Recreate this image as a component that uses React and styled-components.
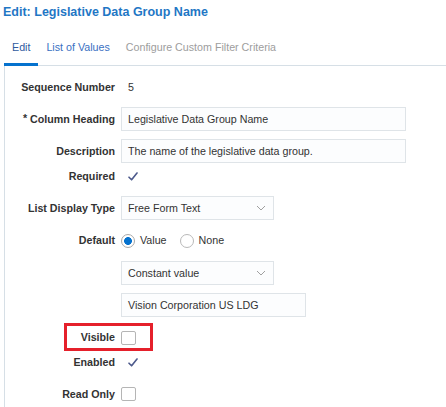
import React from 'react';
import styled, { createGlobalStyle } from 'styled-components';

const GlobalStyle = createGlobalStyle`
  html, body {
    margin: 0;
    padding: 0;
    background: #ffffff;
  }

  body {
    font-family: "Liberation Sans", Arial, sans-serif;
    color: #333333;
  }
`;

const tabs = [
  { label: 'Edit', state: 'active' },
  { label: 'List of Values', state: 'link' },
  { label: 'Configure Custom Filter Criteria', state: 'disabled' },
];

function CheckMark() {
  return (
    <Check width="10" height="9" viewBox="0 0 10 9">
      <path d="M1 5.2 L3.6 7.8 L9 1" fill="none" stroke="#4d5a8c" strokeWidth="1.6" strokeLinecap="round" strokeLinejoin="round" />
    </Check>
  );
}

function Chevron() {
  return (
    <ChevronIcon width="10" height="6" viewBox="0 0 10 6">
      <polyline points="1,1 5,5 9,1" fill="none" stroke="#a0a0a0" strokeWidth="1" />
    </ChevronIcon>
  );
}

function App() {
  return (
    <Page>
      <GlobalStyle />
      <Title>Edit: Legislative Data Group Name</Title>

      <TabBar>
        {tabs.map((tab) => (
          <Tab key={tab.label} $state={tab.state}>
            {tab.label}
          </Tab>
        ))}
      </TabBar>

      <Panel>
        <Row $mt={13}>
          <Label>Sequence Number</Label>
          <ReadValue>5</ReadValue>
        </Row>

        <Row $mt={12}>
          <Label>
            <Star>*</Star> Column Heading
          </Label>
          <TextBox $w={285}>Legislative Data Group Name</TextBox>
        </Row>

        <Row $mt={8}>
          <Label>Description</Label>
          <TextBox $w={285}>The name of the legislative data group.</TextBox>
        </Row>

        <Row $mt={5}>
          <Label>Required</Label>
          <CheckMark />
        </Row>

        <Row $mt={12}>
          <Label>List Display Type</Label>
          <SelectBox $w={153}>
            Free Form Text
            <Chevron />
          </SelectBox>
        </Row>

        <Row $mt={12.5}>
          <Label>Default</Label>
          <RadioGroup>
            <RadioOption>
              <Radio $checked />
              Value
            </RadioOption>
            <RadioOption>
              <Radio />
              None
            </RadioOption>
          </RadioGroup>
        </Row>

        <Row $mt={12.5}>
          <Label />
          <SelectBox $w={153}>
            Constant value
            <Chevron />
          </SelectBox>
        </Row>

        <Row $mt={8}>
          <Label />
          <TextBox $w={185}>Vision Corporation US LDG</TextBox>
        </Row>

        <Row $mt={12.5} $highlight>
          <Label>Visible</Label>
          <CheckBox />
        </Row>

        <Row $mt={8.5}>
          <Label>Enabled</Label>
          <CheckMark />
        </Row>

        <Row $mt={16}>
          <Label>Read Only</Label>
          <CheckBox />
        </Row>
      </Panel>
    </Page>
  );
}

const Page = styled.div`
  width: 446px;
  height: 407px;
  overflow: hidden;
  display: flex;
  flex-direction: column;
`;

const Title = styled.h1`
  margin: 0;
  padding: 4.5px 0 0 3px;
  font-size: 12.5px;
  line-height: 15px;
  font-weight: bold;
  color: #1f77c5;
`;

const TabBar = styled.div`
  display: flex;
  margin: 21.5px 0 0 4px;
  border-bottom: 1px solid #d6dfe6;
`;

const Tab = styled.div`
  padding: 0 8px 9px;
  margin-bottom: -1px;
  font-size: 10.7px;
  line-height: 13px;
  white-space: nowrap;
  border-bottom: 3px solid ${({ $state }) => ($state === 'active' ? '#0572ce' : 'transparent')};
  color: ${({ $state }) =>
    $state === 'active' ? '#2f5a9e' : $state === 'link' ? '#3a70c2' : '#9d9d9d'};
`;

const Panel = styled.div`
  flex: 1;
  margin-left: 4px;
  border-left: 1px solid #d6dfe6;
`;

const Row = styled.div`
  position: relative;
  display: grid;
  grid-template-columns: 110px auto;
  column-gap: 6px;
  align-items: center;
  justify-content: start;
  min-height: 16px;
  margin-top: ${({ $mt }) => $mt}px;

  &::after {
    content: '';
    display: ${({ $highlight }) => ($highlight ? 'block' : 'none')};
    position: absolute;
    left: 59px;
    top: -7px;
    width: 89px;
    height: 28px;
    box-sizing: border-box;
    border: 3px solid #e5202b;
    pointer-events: none;
  }
`;

const Label = styled.div`
  text-align: right;
  font-size: 10.7px;
  line-height: 13px;
  font-weight: bold;
  color: #333333;
  white-space: nowrap;
`;

const Star = styled.span`
  position: relative;
  top: -1px;
`;

const ReadValue = styled.div`
  padding-left: 7px;
  font-size: 10.7px;
  line-height: 13px;
  color: #333333;
`;

const TextBox = styled.div`
  box-sizing: border-box;
  width: ${({ $w }) => $w}px;
  height: 24px;
  padding: 0 6px;
  display: flex;
  align-items: center;
  background: #fcfdfe;
  border: 1px solid #dfe4e8;
  font-size: 10.7px;
  color: #333333;
  white-space: nowrap;
`;

const SelectBox = styled(TextBox)`
  justify-content: space-between;
  padding-right: 7px;
`;

const ChevronIcon = styled.svg`
  display: block;
  flex-shrink: 0;
`;

const Check = styled.svg`
  display: block;
  margin-left: 7px;
`;

const RadioGroup = styled.div`
  display: flex;
  align-items: center;
  gap: 13px;
`;

const RadioOption = styled.label`
  display: flex;
  align-items: center;
  gap: 5px;
  font-size: 10.7px;
  line-height: 13px;
  color: #333333;
`;

const Radio = styled.span`
  box-sizing: border-box;
  width: 14px;
  height: 14px;
  border-radius: 50%;
  border: 1px solid ${({ $checked }) => ($checked ? '#a9a9a9' : '#b9b9b9')};
  background: ${({ $checked }) =>
    $checked ? 'radial-gradient(circle, #0572ce 0 3.6px, #ffffff 4.2px)' : '#ffffff'};
`;

const CheckBox = styled.span`
  box-sizing: border-box;
  width: 15px;
  height: 14px;
  border: 1px solid #b5b5b5;
  border-radius: 2px;
  background: #ffffff;
`;

export default App;
